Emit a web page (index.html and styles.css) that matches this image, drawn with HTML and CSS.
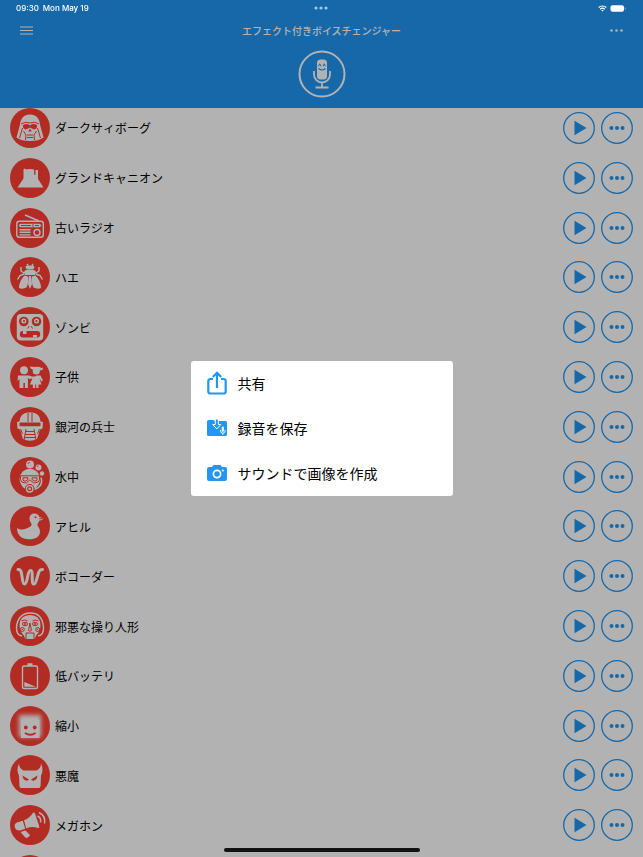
FILE: index.html
```html
<!DOCTYPE html>
<html lang="ja">
<head>
  <meta charset="UTF-8" />
  <meta name="viewport" content="width=device-width, initial-scale=1" />
  <title>エフェクト付きボイスチェンジャー</title>
  <link rel="stylesheet" href="styles.css">
</head>
<body>

  <!-- shared button glyphs -->
  <svg class="sprites" aria-hidden="true">
    <symbol id="play" viewBox="0 0 32 32">
      <circle class="ring" cx="16" cy="16" r="15.3"/>
      <path d="M11.5 8.8 23.5 16l-12 7.2z"/>
    </symbol>
    <symbol id="more" viewBox="0 0 32 32">
      <circle class="ring" cx="16" cy="16" r="15.3"/>
      <circle cx="10.5" cy="16" r="2"/><circle cx="16" cy="16" r="2"/><circle cx="21.5" cy="16" r="2"/>
    </symbol>
  </svg>

  <div class="status">
    <div class="status-time"><span>09:30</span><span>Mon May 19</span></div>
    <svg class="status-dots" viewBox="0 0 14 4"><circle cx="2" cy="2" r="1.6"/><circle cx="7" cy="2" r="1.6"/><circle cx="12" cy="2" r="1.6"/></svg>
    <div class="status-icons">
      <svg width="9" height="7" viewBox="0 0 9 7"><path d="M.7 2.5a5.5 5.5 0 0 1 7.6 0M2.2 4.2a3.3 3.3 0 0 1 4.6 0" fill="none" stroke="#fff" stroke-width="1.2"/><path d="M4.5 6.6 3.2 5.3a1.9 1.9 0 0 1 2.600 0z" fill="#fff"/></svg>
      <svg width="16" height="7" viewBox="0 0 16 7"><rect x=".5" y=".3" width="13.5" height="6.4" rx="2" fill="#fff"/><path d="M14.8 2.3v2.4q.9-.3.9-1.2t-.9-1.2z" fill="#8bbde6"/></svg>
    </div>
  </div>

  <header>
    <div class="nav">
      <button class="nav-btn" aria-label="メニュー">
        <svg width="13" height="9" viewBox="0 0 13 9"><path d="M0 1h13M0 4.5h13M0 8h13"/></svg>
      </button>
      <h1>エフェクト付きボイスチェンジャー</h1>
      <button class="nav-btn" aria-label="その他">
        <svg width="13" height="9" viewBox="0 0 13 9"><g fill="#fff" stroke="none"><circle cx="1.5" cy="4.5" r="1.3"/><circle cx="6.500" cy="4.5" r="1.3"/><circle cx="11.5" cy="4.5" r="1.3"/></g></svg>
      </button>
    </div>
    <button class="mic-btn" aria-label="録音">
      <svg viewBox="0 0 48 48">
        <circle cx="24" cy="24" r="22.5" fill="none" stroke="#fff" stroke-width="2"/>
        <rect x="19" y="9.5" width="10" height="20" rx="3.5" fill="#fff"/>
        <path d="M16 21v3.500a8 8 0 0 0 16 0V21M24 32.500v5M17.500 37.500h13" fill="none" stroke="#fff" stroke-width="1.800"/>
        <path d="M20.5 16.2l1.2-2.400 1.200 2.400M25.100 16.200l1.200-2.400 1.200 2.400" fill="none" stroke="#2196f3"/>
        <path d="M20.5 18.5q3.5 3 7 0" fill="none" stroke="#2196f3" stroke-width="1.2"/>
      </svg>
    </button>
  </header>

  <ul class="voices">
    <li>
      <svg class="voice-icon" viewBox="0 0 40 40">
        <path class="w" d="M20 6.500c-6 0-9.500 4-10 10L6.500 29.500Q11 33 20 33t13.500-3.500L30 16.500c-.5-6-4-10-10-10z"/>
        <path class="l" d="M11 16q4-3 9-1 5-2 9 1M9.500 30l3-10M30.500 30l-3-10"/>
        <path class="r" d="M13 17q4-2 7 .5 3-2.500 7-.5.500 4-3 4.500l-4-2-4 2Q12.500 21 13 17zM20 20.500l-1.800 3h3.600z"/>
        <path class="l" d="M13.500 23l2.500 4-.500 5M26.500 23L24 27l.5 5M17 27h6M17 29.500h6"/>
      </svg>
      <span>ダークサィボーグ</span>
      <button class="round" aria-label="再生"><svg><use href="#play"/></svg></button>
      <button class="round" aria-label="その他"><svg><use href="#more"/></svg></button>
    </li>
    <li>
      <svg class="voice-icon" viewBox="0 0 40 40">
        <path class="w" d="M7.500 29.500l6-9V11.500l1-1 2 1 2-.5 5 .2.7 1.300v4.500l1.300-.5V12H28v9l5.500 8.500z"/>
      </svg>
      <span>グランドキャニオン</span>
      <button class="round" aria-label="再生"><svg><use href="#play"/></svg></button>
      <button class="round" aria-label="その他"><svg><use href="#more"/></svg></button>
    </li>
    <li>
      <svg class="voice-icon" viewBox="0 0 40 40">
        <path class="s" d="M15 7l14 6"/>
        <rect class="s" x="6.800" y="13.300" width="26.500" height="16" rx="2.500"/>
        <rect class="w" x="9" y="15.700" width="22" height="3.600" rx="1.800"/>
        <path class="l" d="M11 17.500h10M23 16v3M25 17.500h4"/>
        <path class="s" d="M9.500 21.700h11M9.500 24.300h11M9.500 26.900h11"/>
        <circle class="s" cx="27" cy="24.500" r="3"/>
      </svg>
      <span>古いラジオ</span>
      <button class="round" aria-label="再生"><svg><use href="#play"/></svg></button>
      <button class="round" aria-label="その他"><svg><use href="#more"/></svg></button>
    </li>
    <li>
      <svg class="voice-icon" viewBox="0 0 40 40">
        <path class="w" d="M15.500 10.500q0-2.500 2.500-2h4q2.500-.5 2.500 2l-1.500 2h-6zM14 16q0-3 3-3h6q3 0 3 3l-1 2H15z"/>
        <path class="w" d="M14.500 18.500l3.500 1q1 6-1.500 11-4 2-7.500.5 0-7 5.500-12.500zM25.500 18.500l-3.500 1q-1 6 1.500 11 4 2 7.500.5 0-7-5.500-12.500zM19 19h2l1 8-2 5-2-5z"/>
        <path class="s" d="M14 16l-3-2v-4M26 16l3-2v-4M14 17l-4 1.500-2.500 4M26 17l4 1.500 2.500 4M18 8.500L17 7M22 8.500L23 7"/>
      </svg>
      <span>ハエ</span>
      <button class="round" aria-label="再生"><svg><use href="#play"/></svg></button>
      <button class="round" aria-label="その他"><svg><use href="#more"/></svg></button>
    </li>
    <li>
      <svg class="voice-icon" viewBox="0 0 40 40">
        <rect class="w" x="6.800" y="7" width="26.400" height="26.500" rx="4"/>
        <circle class="r" cx="13.800" cy="14.500" r="4.800"/><circle class="r" cx="26.500" cy="14.500" r="4.800"/>
        <circle class="w" cx="13.800" cy="14" r="2.500"/><circle class="w" cx="26.500" cy="14" r="2.500"/>
        <circle class="r" cx="14" cy="14" r="1.100"/><circle class="r" cx="26.300" cy="14" r="1.100"/>
        <path class="l" d="M19.200 19l-1.500 2.500M21 19l1.500 2.500"/>
        <rect class="r" x="9.800" y="24" width="20.400" height="6.500" rx="3"/>
        <path class="w" d="M13 24h3.500v3H13zM23 30.500V28h4v2.500z"/>
      </svg>
      <span>ゾンビ</span>
      <button class="round" aria-label="再生"><svg><use href="#play"/></svg></button>
      <button class="round" aria-label="その他"><svg><use href="#more"/></svg></button>
    </li>
    <li>
      <svg class="voice-icon" viewBox="0 0 40 40">
        <circle class="w" cx="14" cy="13.300" r="4"/><circle class="w" cx="26.300" cy="14" r="3.600"/>
        <path class="w" d="M22.500 12.500l-2.500-1.500.5-1.500 5 .5q3-1 6 1l1.500-.5-.5 2.500-3 .5z"/>
        <path class="w" d="M8 18.500h11l3 1h3l1.500-1h4l2.500 5-1.500 1-2-3 2 6h-3V31h-2.300v-3.500h-1V31h-2.300v-3.500h-3l2.500-6-3 .5-1.500-1V31h-3v-5h-1.500v5H9.500v-9L7.500 24z"/>
      </svg>
      <span>子供</span>
      <button class="round" aria-label="再生"><svg><use href="#play"/></svg></button>
      <button class="round" aria-label="その他"><svg><use href="#more"/></svg></button>
    </li>
    <li>
      <svg class="voice-icon" viewBox="0 0 40 40">
        <path class="w" d="M9.500 14.500q.5-8 8-9h5q7.500 1 8 9l2.500.5-.5 6.500-2.500 1-3 9.500q-7 3.500-14 0l-3-9.500-2.500-1L7 15z"/>
        <path class="l" d="M18 6v9M22 6v9M16 22l-2 11M24 22l2 11M15.500 24.500h9M15 27.500h10M14.500 30.500h11M10.500 22l2 5M29.500 22l-2 5"/>
        <rect class="r" x="9.500" y="15.500" width="21" height="3.800" rx="1"/>
      </svg>
      <span>銀河の兵士</span>
      <button class="round" aria-label="再生"><svg><use href="#play"/></svg></button>
      <button class="round" aria-label="その他"><svg><use href="#more"/></svg></button>
    </li>
    <li>
      <svg class="voice-icon" viewBox="0 0 40 40">
        <circle class="w" cx="20" cy="7.500" r="4"/><circle class="w" cx="28.500" cy="10.500" r="3"/><circle class="w" cx="32" cy="16.500" r="2.200"/>
        <path class="l" d="M17.800 7q.3-1.500 2-1.700M27 10q.3-1 1.300-1.200"/>
        <path class="w" d="M9.500 22a10.300 10.300 0 0 1 20.600 0q-.5 6-5 9.500H14.500Q10 28 9.500 22z"/>
        <path class="s" d="M31 20.500q3 8.500-6.500 12"/>
        <path class="l" d="M10.500 18.800h19v4q-1 3-4 3h-2l-3-2.500h-1l-3 2.500h-2q-3 0-4-3z"/>
        <path class="l" d="M13 20.800h5v1.500l-2 1.700h-2l-1-1zM27 20.800h-5v1.500l2 1.700h2l1-1z"/>
        <circle class="r" cx="19.700" cy="31.800" r="4.800"/><circle class="s" cx="19.700" cy="31.800" r="3.200"/><circle class="w" cx="19.700" cy="31.800" r="1.300"/>
      </svg>
      <span>水中</span>
      <button class="round" aria-label="再生"><svg><use href="#play"/></svg></button>
      <button class="round" aria-label="その他"><svg><use href="#more"/></svg></button>
    </li>
    <li>
      <svg class="voice-icon" viewBox="0 0 40 40">
        <path class="w" d="M19.500 12.500c0-3 2-5 5-5 2.500 0 4.300 1.500 4.800 3.500l4.200 1.200q-1 2.300-4.300 2.500c-.7 2.300-2.200 3-1.700 4.500 1 2 2.500 3.500 2.500 6.500 0 5-4.500 7.500-11 7.500C12 33.200 7 29.500 7 22c3 2 6.500 2 9.500.5 3-1.200 5.500-2.500 5-4.500-.5-1.700-2-2.500-2-5.500z"/>
        <circle class="r" cx="25.500" cy="11.200" r="1"/>
        <path class="l" d="M29.300 12.800l3.500-.2"/>
      </svg>
      <span>アヒル</span>
      <button class="round" aria-label="再生"><svg><use href="#play"/></svg></button>
      <button class="round" aria-label="その他"><svg><use href="#more"/></svg></button>
    </li>
    <li>
      <svg class="voice-icon" viewBox="0 0 40 40">
        <path class="s wave" d="M8 13.500c5.500-1.500 3 14.500 6.500 14.500s2.500-13.500 6-13.500S20.500 28 24 28s3-16 8.500-14.500"/>
      </svg>
      <span>ボコーダー</span>
      <button class="round" aria-label="再生"><svg><use href="#play"/></svg></button>
      <button class="round" aria-label="その他"><svg><use href="#more"/></svg></button>
    </li>
    <li>
      <svg class="voice-icon" viewBox="0 0 40 40">
        <path class="s" d="M12 30q-6-1-5.500-9Q8 7.500 20 7t13.500 14q.5 8-5.500 9"/>
        <path class="w" d="M20 9q-10 0-10.500 10 0 6 4 10l2 4h9l2-4q4-4 4-10Q30 9 20 9z"/>
        <path class="l" d="M11.500 15q3-2 6 0M28.500 15q-3-2-6 0M20 17l-1.500 7.500q1.500 1.500 3 0L20 17M16 27h8M16 27v6M24 27v6"/>
        <ellipse class="l" cx="15" cy="18" rx="2.600" ry="1.700"/><ellipse class="l" cx="25" cy="18" rx="2.600" ry="1.700"/>
        <circle class="r" cx="15" cy="18" r=".9"/><circle class="r" cx="25" cy="18" r=".9"/>
        <circle class="l" cx="12.300" cy="23.500" r="2"/><circle class="l" cx="27.700" cy="23.500" r="2"/>
        <circle class="r" cx="12.300" cy="23.500" r=".7"/><circle class="r" cx="27.700" cy="23.500" r=".7"/>
      </svg>
      <span>邪悪な操り人形</span>
      <button class="round" aria-label="再生"><svg><use href="#play"/></svg></button>
      <button class="round" aria-label="その他"><svg><use href="#more"/></svg></button>
    </li>
    <li>
      <svg class="voice-icon" viewBox="0 0 40 40">
        <rect class="s" x="12.500" y="10" width="15" height="22.500" rx="1.500"/>
        <path class="w" d="M17.500 7.300h5V10h-5zM14.300 26l11.500 4.800H14.300z"/>
      </svg>
      <span>低バッテリ</span>
      <button class="round" aria-label="再生"><svg><use href="#play"/></svg></button>
      <button class="round" aria-label="その他"><svg><use href="#more"/></svg></button>
    </li>
    <li>
      <svg class="voice-icon" viewBox="0 0 40 40">
        <rect class="w glow" x="9" y="9" width="22" height="22"/>
        <rect class="w" x="11" y="14" width="18.500" height="18"/>
        <circle class="r" cx="15.800" cy="21.500" r="1.900"/><circle class="r" cx="24.700" cy="21.500" r="1.900"/>
        <path class="l smile" d="M15 27q5.200 3.500 10.500 0"/>
      </svg>
      <span>縮小</span>
      <button class="round" aria-label="再生"><svg><use href="#play"/></svg></button>
      <button class="round" aria-label="その他"><svg><use href="#more"/></svg></button>
    </li>
    <li>
      <svg class="voice-icon" viewBox="0 0 40 40">
        <path class="w" d="M9 8.500q0 5 4.500 7h13q4.500-2 4.500-7 3 6.500 0 12l-.5 11q-.5 1.500-2 1.500h-17q-1.500 0-2-1.500l-.5-11q-3-5.500 0-12z"/>
        <path class="r" d="M12.500 20.500l6.500 4q-1 1.500-3 1-3-.7-3.500-5zM27.500 20.500l-6.500 4q1 1.500 3 1 3-.7 3.500-5z"/>
      </svg>
      <span>悪魔</span>
      <button class="round" aria-label="再生"><svg><use href="#play"/></svg></button>
      <button class="round" aria-label="その他"><svg><use href="#more"/></svg></button>
    </li>
    <li>
      <svg class="voice-icon" viewBox="0 0 40 40">
        <path class="w" d="M14 15.300Q20 13 23 7.800q1.300-.8 2 .7l4.300 13q.2 1.700-1.500 1.500-5.500-2-11.600.3zM12.800 15.800l2.400 8-5.200 1.700q-4 .3-5.200-3.300-.7-3.500 2.200-4.700zM10.500 27l5-1.600 4.700 4.800-3 2.800-2-.5z"/>
        <path class="s" d="M27.500 11q4 2 3 6.500M29 7.500q7 3.500 5.500 11"/>
      </svg>
      <span>メガホン</span>
      <button class="round" aria-label="再生"><svg><use href="#play"/></svg></button>
      <button class="round" aria-label="その他"><svg><use href="#more"/></svg></button>
    </li>
    <li>
      <svg class="voice-icon" viewBox="0 0 40 40"></svg>
    </li>
  </ul>

  <div class="overlay">
    <div class="popup" role="dialog" aria-label="共有">
      <button>
        <svg viewBox="0 0 20 24"><path d="M6 8H3.500Q1.300 8 1.300 10.200v10Q1.300 22.500 3.500 22.500h13q2.200 0 2.200-2.300v-10Q18.700 8 16.500 8H14M10 17V2M5.800 6 10 1.800 14.200 6" fill="none" stroke="#2196f3" stroke-width="2.200"/></svg>
        共有
      </button>
      <button>
        <svg viewBox="0 0 20 24">
          <path d="M0 5.500Q0 4 1.500 4h5l1.500 1h10.500Q20 5 20 6.500v12q0 1.500-1.500 1.500h-17Q0 20 0 18.500z" fill="#2196f3"/>
          <path d="M8.300 3h3v5.500h2.500l-4 4.500-4-4.500h2.500z" fill="#2196f3" stroke="#fff"/>
          <rect x="14.700" y="10.500" width="2.200" height="5.300" rx="1.100" fill="#fff"/>
          <path d="M13.300 14q0 3.200 2.500 3.200t2.500-3.200M15.800 17v2" fill="none" stroke="#fff" stroke-width=".9"/>
        </svg>
        録音を保存
      </button>
      <button>
        <svg viewBox="0 0 20 24">
          <path d="M0 8q0-2 2-2h3l1.500-2h7L15 6h3q2 0 2 2v10q0 2-2 2H2q-2 0-2-2z" fill="#2196f3"/>
          <circle cx="10" cy="13" r="3.600" fill="none" stroke="#fff" stroke-width="1.700"/>
          <circle cx="15.800" cy="9.500" r="1" fill="#fff"/>
        </svg>
        サウンドで画像を作成
      </button>
    </div>
  </div>

  <div class="home-bar"></div>

</body>
</html>
```

FILE: styles.css
```css
* {
  margin: 0;
  padding: 0;
  box-sizing: border-box;
}
body {
  font-family: "Noto Sans CJK JP", sans-serif;
  background: #fff;
  color: #000;
  height: 100vh;
  overflow: hidden;
}
button {
  border: none;
  background: none;
  font-family: inherit;
  color: inherit;
  cursor: pointer;
}
svg {
  display: block;
  flex: none;
}
.sprites {
  position: absolute;
  width: 0;
  height: 0;
}

/* status bar stays bright above the overlay */
.status {
  position: fixed;
  top: 0;
  left: 0;
  right: 0;
  z-index: 20;
  display: grid;
  grid-template-columns: 1fr auto 1fr;
  align-items: center;
  height: 16px;
  padding: 0 17px 0 16px;
  font-family: Inter, sans-serif;
  font-size: 8px;
  font-weight: 500;
  color: #fff;
}
.status-time {
  display: flex;
  gap: 4px;
}
.status-dots {
  width: 14px;
  height: 4px;
  fill: #8fccff;
}
.status-icons {
  display: flex;
  justify-content: flex-end;
  gap: 3px;
}

header {
  position: relative;
  z-index: 1;
  display: flex;
  flex-direction: column;
  align-items: center;
  height: 108px;
  padding-top: 19px;
  background: #2196f3;
  color: #fff;
}
.nav {
  display: flex;
  justify-content: space-between;
  align-items: center;
  width: 100%;
  height: 22px;
  padding: 0 20px;
}
.nav h1 {
  font-size: 10px;
  font-weight: 500;
}
.nav-btn svg {
  stroke: #fff;
  stroke-width: 1;
}
.mic-btn {
  margin-top: 9px;
}
.mic-btn svg {
  width: 48px;
  height: 48px;
}

/* sixteen rows share the height, the last one runs off the screen */
.voices {
  display: grid;
  grid-auto-rows: minmax(44px, 1fr);
  min-height: calc(100vh - 60px);
  margin-top: -5px;
  list-style: none;
}
.voices li {
  display: flex;
  align-items: center;
  padding: 0 10px;
  font-size: 12px;
}
.voices span {
  flex: 1;
  margin-left: 5px;
}
.voice-icon {
  width: 40px;
  height: 40px;
  border-radius: 50%;
  background: #ff4034;
}
.voice-icon .w {
  fill: #fff;
}
.voice-icon .r {
  fill: #ff4034;
}
.voice-icon .s {
  fill: none;
  stroke: #fff;
  stroke-width: 1.4;
}
.voice-icon .l {
  fill: none;
  stroke: #ff4034;
  stroke-width: 1;
}
.voice-icon .wave {
  stroke-width: 3;
  stroke-linecap: round;
}
.voice-icon .smile {
  stroke-width: 2;
}
.voice-icon .glow {
  filter: blur(2px);
}
.round {
  margin-left: 6px;
}
.round svg {
  width: 32px;
  height: 32px;
  fill: #2196f3;
}
.ring {
  fill: none;
  stroke: #2196f3;
  stroke-width: 1.3;
}

.overlay {
  position: fixed;
  inset: 0;
  z-index: 10;
  display: flex;
  justify-content: center;
  align-items: center;
  background: rgba(0, 0, 0, 0.3);
}
.popup {
  width: 262px;
  max-width: 90%;
  background: #fff;
  border-radius: 3px;
}
.popup button {
  display: flex;
  align-items: center;
  gap: 11px;
  width: 100%;
  height: 45px;
  padding: 0 16px 2px;
  font-size: 14px;
  text-align: left;
}
.popup svg {
  width: 20px;
  height: 24px;
}

.home-bar {
  position: fixed;
  left: 50%;
  bottom: 5px;
  z-index: 20;
  width: 196px;
  height: 4px;
  margin-left: -98px;
  border-radius: 2px;
  background: #111;
}
```
